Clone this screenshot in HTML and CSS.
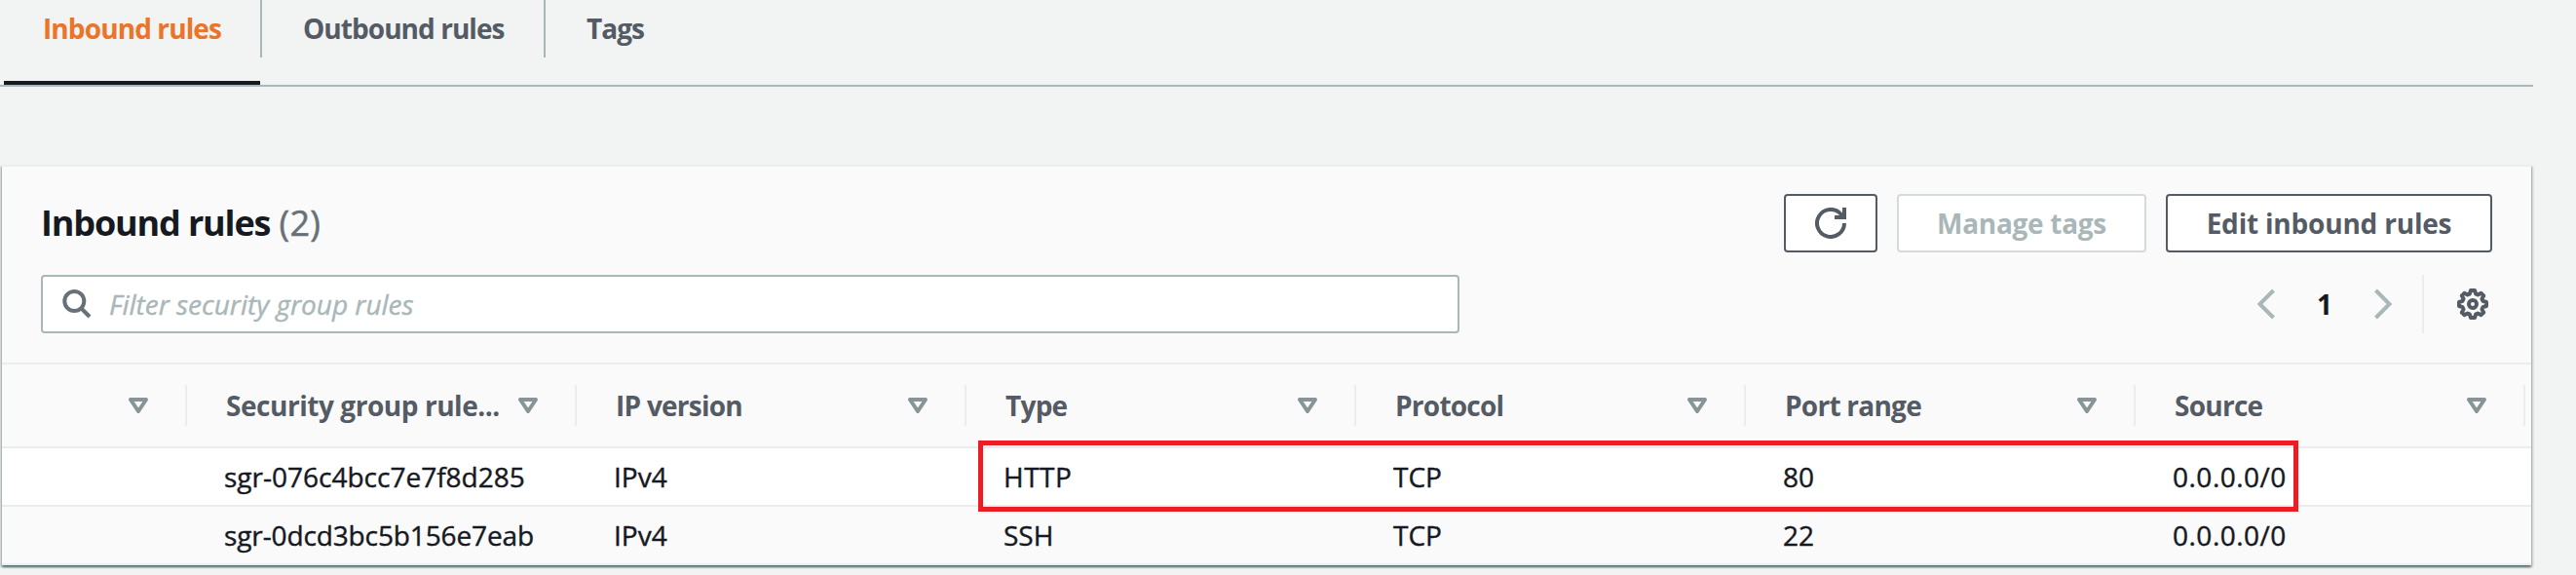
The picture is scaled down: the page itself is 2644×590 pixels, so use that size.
FILE: index.html
```
<!DOCTYPE html>
<html lang="en">
<head>
<meta charset="utf-8">
<title>Security group</title>
<link rel="stylesheet" href="styles.css">
</head>
<body>
<svg class="defs" width="0" height="0">
  <symbol id="caret" viewBox="0 0 20 16"><path d="M2 2h16L10 14z" fill="none" stroke="#879596" stroke-width="4" stroke-linejoin="round"/></symbol>
</svg>
<nav class="tabs">
  <a class="tab tab-active"><span>Inbound rules</span></a>
  <a class="tab tab-outbound"><span>Outbound rules</span></a>
  <a class="tab tab-last"><span>Tags</span></a>
</nav>
<main class="panel">
  <header class="panel-head">
    <div class="title-row">
      <h2 class="title">Inbound rules <span class="count">(2)</span></h2>
      <div class="actions">
        <button class="btn btn-icon" aria-label="Refresh">
          <svg width="32" height="32" viewBox="0 0 32 32" fill="none" stroke="#545b64" stroke-width="4"><path d="M30 16A14 14 0 1 1 26.5 6.7L29 10"/><path d="M30 0v10H20"/></svg>
        </button>
        <button class="btn btn-disabled">Manage tags</button>
        <button class="btn btn-edit">Edit inbound rules</button>
      </div>
    </div>
    <div class="filter-row">
      <div class="search">
        <svg width="30" height="30" viewBox="0 0 30 30" fill="none" stroke="#687078" stroke-width="4"><circle cx="12.3" cy="12" r="10"/><path d="M19.5 19.5L28 28"/></svg>
        <span class="placeholder">Filter security group rules</span>
      </div>
      <div class="pager">
        <svg width="20" height="32" viewBox="0 0 20 32" fill="none" stroke="#aab7b8" stroke-width="4"><path d="M17.5 2L3.5 16l14 14"/></svg>
        <span class="page">1</span>
        <svg width="20" height="32" viewBox="0 0 20 32" fill="none" stroke="#aab7b8" stroke-width="4"><path d="M2.5 2l14 14-14 14"/></svg>
        <span class="settings">
          <svg width="32" height="32" viewBox="0 0 32 32" fill="none" stroke="#545b64" stroke-width="4" stroke-linejoin="round"><path d="M14 2h4l1.2 3.6 2.1.9L24.6 4.8l2.6 2.6-1.7 3.3.9 2.1L30 14v4l-3.6 1.2-.9 2.1 1.7 3.3-2.6 2.6-3.3-1.7-2.1.9L18 30h-4l-1.2-3.6-2.1-.9-3.3 1.7-2.6-2.6 1.7-3.3-.9-2.1L2 18v-4l3.6-1.2.9-2.1-1.7-3.3 2.6-2.6 3.3 1.7 2.1-.9z"/><circle cx="16" cy="16" r="4"/></svg>
        </span>
      </div>
    </div>
  </header>
  <div class="row row-head">
    <div class="th"><span></span><svg class="caret"><use href="#caret"/></svg></div>
    <div class="th"><span class="long">Security group rule...</span><svg class="caret"><use href="#caret"/></svg></div>
    <div class="th"><span>IP version</span><svg class="caret"><use href="#caret"/></svg></div>
    <div class="th"><span>Type</span><svg class="caret"><use href="#caret"/></svg></div>
    <div class="th"><span>Protocol</span><svg class="caret"><use href="#caret"/></svg></div>
    <div class="th"><span>Port range</span><svg class="caret"><use href="#caret"/></svg></div>
    <div class="th"><span>Source</span><svg class="caret"><use href="#caret"/></svg></div>
  </div>
  <div class="row row-body">
    <div></div><div class="td">sgr-076c4bcc7e7f8d285</div><div class="td">IPv4</div><div class="td type">HTTP</div><div class="td">TCP</div><div class="td">80</div><div class="td source">0.0.0.0/0</div>
  </div>
  <div class="row row-body row-alt">
    <div></div><div class="td rule-id">sgr-0dcd3bc5b156e7eab</div><div class="td">IPv4</div><div class="td">SSH</div><div class="td">TCP</div><div class="td">22</div><div class="td source">0.0.0.0/0</div>
  </div>
</main>
<div class="highlight"></div>
</body>
</html>
```
FILE: styles.css
```
* { box-sizing: border-box; }
body {
  margin: 0;
  position: relative;
  width: 2644px;
  height: 590px;
  overflow: hidden;
  background: #f2f3f3;
  color: #16191f;
  font: 28px/36px "Open Sans", "Noto Sans", sans-serif;
  white-space: nowrap;
}
svg { display: block; flex: none; }
.defs { position: absolute; }

.tabs {
  display: flex;
  width: 2600px;
  height: 89px;
  padding-left: 4px;
  border-bottom: 2px solid #aab7b8;
}
.tab {
  display: flex;
  height: 59px;
  padding: 10px 40px 0;
  border-right: 2px solid #aab7b8;
  color: #545b64;
  font-weight: 700;
  letter-spacing: -0.95px;
}
.tab-active {
  width: 263px;
  height: 87px;
  margin-right: 2px;
  padding: 0;
  border: 0;
  border-bottom: 4px solid #16191f;
  color: #eb7428;
  letter-spacing: -0.9px;
}
.tab-active span {
  flex: none;
  width: 265px;
  height: 59px;
  padding: 11px 0 0 40px;
  border-right: 2px solid #aab7b8;
}
.tab-outbound { width: 291px; padding-top: 11px; padding-left: 42px; }
.tab-last { padding-top: 11px; padding-left: 42px; border: 0; }

.panel {
  width: 2596px;
  margin: 80px 0 0 2px;
  border-top: 2px solid #eaeded;
  background: #fafafa;
  box-shadow: 0 2px 2px 0 rgba(0, 28, 36, .5), 2px 2px 2px 0 rgba(0, 28, 36, .15), -2px 2px 2px 0 rgba(0, 28, 36, .15);
}
.panel-head {
  height: 203px;
  padding: 28px 40px 0;
  border-bottom: 2px solid #eaeded;
}
.title-row {
  display: flex;
  justify-content: space-between;
  height: 60px;
}
.title {
  margin: 0;
  font-size: 36px;
  line-height: 59px;
  letter-spacing: -1.15px;
}
.count {
  margin-left: 1px;
  color: #687078;
  font-weight: 400;
  letter-spacing: .3px;
  -webkit-text-stroke: .5px;
}
.actions { display: flex; gap: 20px; }
.btn {
  display: flex;
  align-items: center;
  justify-content: center;
  height: 60px;
  padding: 0;
  border: 2px solid #545b64;
  border-radius: 4px;
  background: #fff;
  color: #545b64;
  font: 700 28px/36px "Open Sans", "Noto Sans", sans-serif;
  letter-spacing: -0.2px;
}
.btn-icon { width: 96px; }
.btn-disabled { width: 256px; border-color: #d5dbdb; color: #aab7b8; letter-spacing: -0.3px; }
.btn-edit { width: 335px; }

.filter-row {
  display: flex;
  justify-content: space-between;
  height: 60px;
  margin-top: 23px;
}
.search {
  display: flex;
  align-items: center;
  gap: 18px;
  width: 1456px;
  padding-left: 20px;
  border: 2px solid #aab7b8;
  border-radius: 4px;
  background: #fff;
}
.placeholder { color: #aab7b8; font-style: italic; -webkit-text-stroke: .4px; }
.pager { display: flex; align-items: center; padding-right: 4px; }
.page { width: 100px; text-align: center; font-weight: 700; }
.settings {
  display: flex;
  align-items: center;
  justify-content: flex-end;
  width: 68px;
  height: 60px;
  margin-left: 30px;
  border-left: 2px solid #eaeded;
}

.row {
  display: grid;
  grid-template-columns: 190px repeat(6, 400px);
  align-items: center;
  border-bottom: 2px solid #eaeded;
}
.row-head { height: 86px; }
.th {
  display: flex;
  align-items: center;
  justify-content: space-between;
  height: 42px;
  padding: 0 38px 0 40px;
  border-right: 2px solid #eaeded;
  color: #545b64;
  font-weight: 700;
  letter-spacing: -0.75px;
}
.long { letter-spacing: -0.45px; }
.caret { width: 20px; height: 16px; }
.row-body { height: 60px; background: #fff; -webkit-text-stroke: .4px; }
.row-alt { background: #fafafa; }
.td { padding-left: 38px; }
.rule-id { letter-spacing: -.12px; }
.type { letter-spacing: .5px; }
.source { letter-spacing: .5px; }

.highlight {
  position: absolute;
  left: 1004px;
  top: 452px;
  width: 1355px;
  height: 73px;
  border: 5px solid #ed1c24;
}
```
